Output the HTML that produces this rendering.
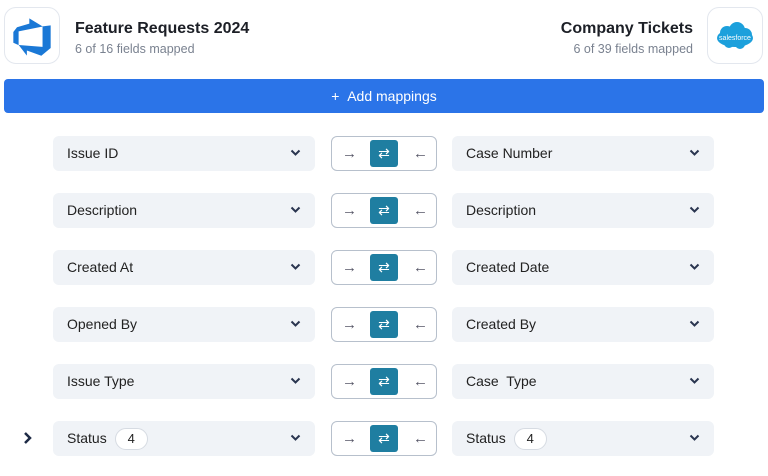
<!DOCTYPE html>
<html><head><style>
body{margin:0;width:768px;height:476px;background:#fff;font-family:"Liberation Sans",sans-serif;position:relative;overflow:hidden;color:#1f2937}
.logo{position:absolute;top:7px;width:54px;height:55px;border:1px solid #e3e7ee;border-radius:12px;background:#fff}
.t{position:absolute;font-size:16px;font-weight:bold;color:#1c1f26}
.s{position:absolute;font-size:12.5px;color:#7a8290}
.btn{position:absolute;left:4px;top:79px;width:760px;height:34px;background:#2b74e8;border-radius:4px;color:#fff;font-size:14px;text-align:center;line-height:34px}
.dd{position:absolute;width:262px;height:35px;background:#f0f3f7;border-radius:6px;font-size:14px;line-height:35px;color:#222}
.dd span.l{position:absolute;left:14px}
.dd svg{position:absolute;right:14px;top:13px}
.tg{position:absolute;left:331px;width:104px;height:33px;border:1px solid #b7c0cc;border-radius:6px;background:#fff}
.tg .a{position:absolute;left:38px;top:3px;width:28px;height:27px;background:#1f7ea1;border-radius:3px;color:#fff;text-align:center;line-height:27px;font-size:14px}
.tg .x{position:absolute;top:0;line-height:33px;font-size:15px;color:#556}
.pill{display:inline-block;border:1px solid #d6dbe2;background:#fff;border-radius:12px;height:20px;line-height:20px;padding:0 12px;margin-left:4px;font-size:13px;vertical-align:middle}
</style></head><body>
<div class="logo" style="left:4px">
<svg style="position:absolute;left:6px;top:8px" width="42" height="42" viewBox="0 0 18 18"><path d="M17 4v9.74l-4 3.28-6.2-2.26V17l-3.51-4.59 10.23.8V4.44zm-3.41.49L7.85 1v2.29L2.58 4.84 1 6.87v4.61l2.26 1v-5.9z" fill="#1a78d6"/></svg></div>
<div class="t" style="left:75px;top:20px">Feature Requests 2024</div>
<div class="s" style="left:75px;top:42px">6 of 16 fields mapped</div>
<div class="t" style="right:75px;top:20px">Company Tickets</div>
<div class="s" style="right:75px;top:42px">6 of 39 fields mapped</div>
<div class="logo" style="left:707px">
<svg width="54" height="55" viewBox="0 0 54 55"><ellipse cx="27" cy="30" rx="18" ry="9" fill="#1ca0dc"/><circle cx="19" cy="25" r="7" fill="#1ca0dc"/><circle cx="29" cy="22" r="8" fill="#1ca0dc"/><circle cx="37" cy="27" r="7" fill="#1ca0dc"/><circle cx="21" cy="35" r="5" fill="#1ca0dc"/><circle cx="32" cy="36" r="5" fill="#1ca0dc"/><text x="27" y="32" font-size="7" fill="#fff" text-anchor="middle" font-family="Liberation Sans">salesforce</text></svg></div>
<div class="btn">+&nbsp;&nbsp;Add mappings</div>

<svg style="position:absolute;left:23px;top:431px" width="10" height="14" viewBox="0 0 10 14"><path d="M2 2 L7 7 L2 12" stroke="#1e2b45" stroke-width="2.5" fill="none"/></svg>

<script>
var rows=[["Issue ID","Case Number"],["Description","Description"],["Created At","Created Date"],["Opened By","Created By"],["Issue Type","Case&nbsp; Type"],["Status <span class='pill'>4</span>","Status <span class='pill'>4</span>"]];
var chev='<svg width="11" height="8" viewBox="0 0 11 8"><path d="M1.5 1.5 L5.5 5.5 L9.5 1.5" stroke="#2a3550" stroke-width="2" fill="none"/></svg>';
rows.forEach(function(r,i){var y=136+i*57;
document.write('<div class="dd" style="left:53px;top:'+y+'px"><span class="l">'+r[0]+'</span>'+chev+'</div>');
document.write('<div class="tg" style="top:'+y+'px"><span class="x" style="left:10px">&rarr;</span><div class="a">&#8644;</div><span class="x" style="left:81px">&larr;</span></div>');
document.write('<div class="dd" style="left:452px;top:'+y+'px"><span class="l">'+r[1]+'</span>'+chev+'</div>');});
</script>
</body></html>
